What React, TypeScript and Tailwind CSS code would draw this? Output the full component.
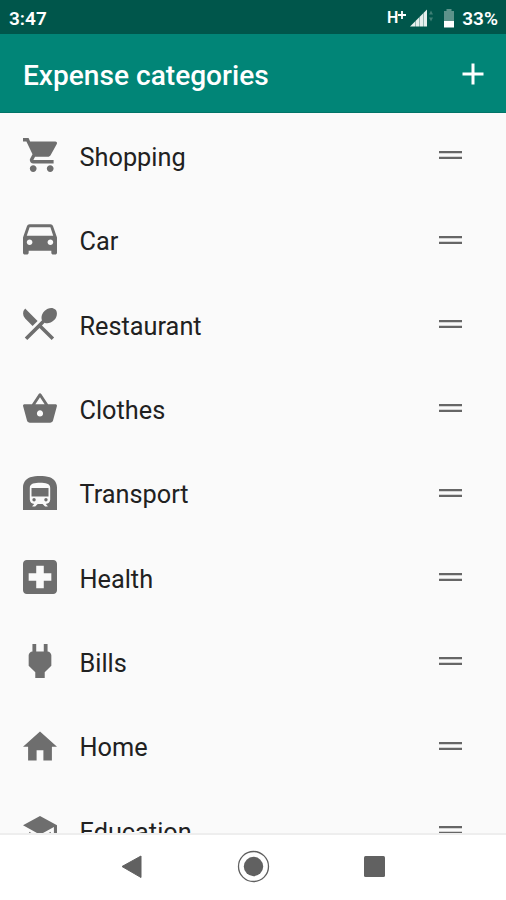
import React from 'react';
import {
  MdAdd,
  MdDirectionsCar,
  MdHome,
  MdLocalDining,
  MdLocalHospital,
  MdPower,
  MdSchool,
  MdShoppingBasket,
  MdShoppingCart,
  MdSubway
} from 'react-icons/md';
import type { IconType } from 'react-icons';

interface Category {
  title: string;
  icon: IconType;
  // trimmed to the glyph, so every icon fills its box
  viewBox: string;
}

const categories: Category[] = [
  { title: 'Shopping', icon: MdShoppingCart, viewBox: '1 2 20 20' },
  { title: 'Car', icon: MdDirectionsCar, viewBox: '3 4.3 18 18' },
  { title: 'Restaurant', icon: MdLocalDining, viewBox: '2.7 3.1 19.2 18.2' },
  { title: 'Clothes', icon: MdShoppingBasket, viewBox: '1 2 22 19' },
  { title: 'Transport', icon: MdSubway, viewBox: '2 2 20 20' },
  { title: 'Health', icon: MdLocalHospital, viewBox: '3 3 18 18' },
  { title: 'Bills', icon: MdPower, viewBox: '6 3 12 18' },
  { title: 'Home', icon: MdHome, viewBox: '2 3 20 17' },
  { title: 'Education', icon: MdSchool, viewBox: '1 3 22 18' }
];

const StatusBar: React.FC = () => (
  <div className="h-[34px] shrink-0 bg-[#00564b] text-white flex items-center justify-between pl-[9px] pr-2 pt-[2px]">
    <span className="text-[19px] leading-none font-semibold">3:47</span>
    <div className="flex items-center">
      <span className="text-[16px] leading-none font-semibold">H</span>
      <svg className="mb-[6px]" width="8" height="8" viewBox="0 0 8 8">
        <path d="M4 0v8M0 4h8" stroke="#fff" strokeWidth="1.8" />
      </svg>
      <svg className="ml-1" width="24" height="18" viewBox="0 0 24 18">
        <path d="M0 17.500L17 0.500v17z" fill="#e6efed" />
        <path d="M5.5 12v6M9.5 8v10M13.5 4v14" stroke="#00564b" strokeOpacity="0.35" strokeWidth="1" />
        <path d="M19 5.500l2-4 2 4zM19 8.500h4l-2 4z" fill="#3f8076" />
      </svg>
      <svg className="ml-[9px]" width="12" height="19" viewBox="0 0 12 19">
        <path d="M3.5 0h5v2H11v10H1V2h2.5z" fill="#5d938b" />
        <path d="M1 12h10v6.500H1z" fill="#fff" />
      </svg>
      <span className="ml-[7px] text-[19px] leading-none font-semibold">33%</span>
    </div>
  </div>
);

const DragHandle: React.FC = () => (
  <svg className="shrink-0" width="23" height="10" viewBox="0 0 23 10">
    <path d="M0 2.2h23M0 7.800h23" stroke="#666666" strokeWidth="2.3" />
  </svg>
);

const NavigationBar: React.FC = () => (
  <div className="h-[67px] shrink-0 bg-white border-t-2 border-[#eeeeee]">
    <svg width="506" height="65" viewBox="0 0 506 65">
      <path d="M122 31.500L141 21v21.500z" fill="#616161" stroke="#616161" strokeLinejoin="round" />
      <circle cx="253.500" cy="31.500" r="15" fill="none" stroke="#616161" strokeWidth="1.300" />
      <circle cx="253.500" cy="31.500" r="9.700" fill="#616161" />
      <rect x="364" y="21" width="21" height="21" rx="1.500" fill="#616161" />
    </svg>
  </div>
);

export default function App() {
  return (
    <div className="w-[506px] h-[900px] overflow-hidden flex flex-col bg-[#fafafa] font-[Roboto,sans-serif]">
      <StatusBar />
      <header className="h-[79px] shrink-0 bg-[#018577] border-b border-[#017468] text-white flex items-center justify-between pl-[23px] pr-4 pt-1">
        <h1 className="pt-[2px] text-[28.1px] leading-none font-medium">Expense categories</h1>
        <MdAdd size={36} className="-mr-px mb-[3px]" />
      </header>

      <ul className="flex-1 min-h-0 overflow-hidden">
        {categories.map((category) => (
          <li key={category.title} className="h-[84.35px] flex items-center pl-[23px] pr-[44px]">
            <category.icon size={34} viewBox={category.viewBox} className="shrink-0 text-[#6e6e6e]" />
            <span className="ml-[22.500px] flex-1 pt-[5px] text-[25.3px] leading-none text-[#212121]">
              {category.title}
            </span>
            <DragHandle />
          </li>
        ))}
      </ul>

      <NavigationBar />
    </div>
  );
}
